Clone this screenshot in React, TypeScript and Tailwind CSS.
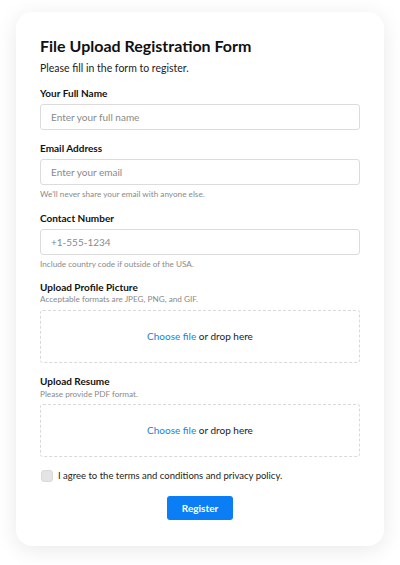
import React from 'react';

const font = { fontFamily: 'Lato, "Noto Sans", sans-serif' };

function DropZone() {
  return (
    <div className="h-[53px] flex items-center justify-center border border-dashed border-[#d9d9d9] rounded-[3px] text-[10px] text-[#222]">
      <span className="text-[#1a7fd9]">Choose file</span>
      <span>&nbsp;or drop here</span>
    </div>
  );
}

export default function App() {
  return (
    <div className="min-h-[565px] bg-white pt-3 px-4" style={font}>
      <div className="bg-white rounded-2xl shadow-[0_4px_22px_rgba(0,0,0,0.09)] px-6 pt-6 pb-[26px]">
        {/* Header */}
        <h1 className="text-[16px] leading-5 font-bold text-[#111]">File Upload Registration Form</h1>
        <p className="mt-1 text-[10.5px] leading-4 text-[#222]">Please fill in the form to register.</p>

        {/* Full name */}
        <label className="block mt-[10px] text-[10px] leading-[14px] font-bold text-[#111]">Your Full Name</label>
        <input
          className="mt-1 w-full h-[26px] px-[10px] border border-[#dcdcdc] rounded-[3px] text-[10px] placeholder:text-[#8a8a8a] outline-none"
          placeholder="Enter your full name"
        />

        {/* Email */}
        <label className="block mt-[11px] text-[10px] leading-[14px] font-bold text-[#111]">Email Address</label>
        <input
          className="mt-1 w-full h-[26px] px-[10px] border border-[#dcdcdc] rounded-[3px] text-[10px] placeholder:text-[#8a8a8a] outline-none"
          placeholder="Enter your email"
        />
        <p className="mt-[3px] text-[8.2px] leading-3 text-[#8a8a8a]">We'll never share your email with anyone else.</p>

        {/* Contact */}
        <label className="block mt-[11px] text-[10px] leading-[14px] font-bold text-[#111]">Contact Number</label>
        <input
          className="mt-1 w-full h-[26px] px-[10px] border border-[#dcdcdc] rounded-[3px] text-[10px] placeholder:text-[#8a8a8a] outline-none"
          placeholder="+1-555-1234"
        />
        <p className="mt-[3px] text-[8.2px] leading-3 text-[#8a8a8a]">Include country code if outside of the USA.</p>

        {/* Profile picture */}
        <label className="block mt-[11px] text-[10px] leading-3 font-bold text-[#111]">Upload Profile Picture</label>
        <p className="text-[8.2px] leading-3 text-[#8a8a8a]">Acceptable formats are JPEG, PNG, and GIF.</p>
        <div className="mt-[5px]">
          <DropZone />
        </div>

        {/* Resume */}
        <label className="block mt-3 text-[10px] leading-3 font-bold text-[#111]">Upload Resume</label>
        <p className="mt-px text-[8.2px] leading-3 text-[#8a8a8a]">Please provide PDF format.</p>
        <div className="mt-1">
          <DropZone />
        </div>

        {/* Terms */}
        <div className="mt-3 flex items-center gap-[5px] h-[14px]">
          <span className="w-[12px] h-[12px] ml-px rounded-[3px] bg-[#e4e4e4] border border-[#dadada]" />
          <span className="text-[9.5px] text-[#222]">I agree to the terms and conditions and privacy policy.</span>
        </div>

        {/* Submit */}
        <div className="mt-[13px] flex justify-center">
          <button className="h-6 w-[66px] rounded-[3px] bg-[#0b7ef5] text-white text-[10px] font-bold">Register</button>
        </div>
      </div>
    </div>
  );
}
